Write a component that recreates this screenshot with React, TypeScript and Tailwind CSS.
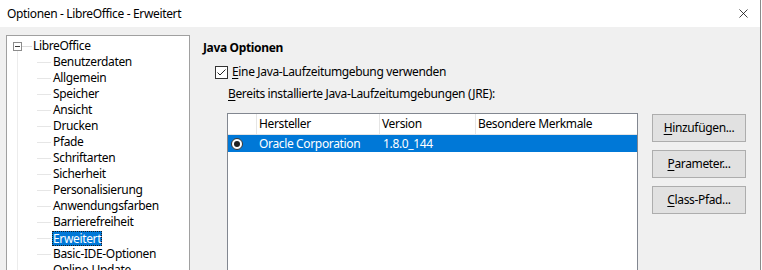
import { X } from "lucide-react"

const treeItems = [
  "Benutzerdaten",
  "Allgemein",
  "Speicher",
  "Ansicht",
  "Drucken",
  "Pfade",
  "Schriftarten",
  "Sicherheit",
  "Personalisierung",
  "Anwendungsfarben",
  "Barrierefreiheit",
  "Erweitert",
  "Basic-IDE-Optionen",
  "Online-Update",
]

function Btn({ hot, rest }: { hot: string; rest: string }) {
  return (
    <button className="h-[28px] w-[94px] border border-[#adadad] bg-[#e1e1e1] text-[12px] text-black">
      <span className="underline underline-offset-2">{hot}</span>
      {rest}
    </button>
  )
}

export default function App() {
  return (
    <div
      className="w-[762px] h-[270px] overflow-hidden bg-white tracking-[-0.35px]"
      style={{ fontFamily: '"Segoe UI", "Noto Sans", sans-serif' }}
    >
      <div className="w-[761px] h-[270px] border-r border-[#8a8a8a] flex flex-col">
        {/* Title bar */}
        <div className="h-[27px] shrink-0 bg-white flex items-center justify-between pl-[7px] pr-[9px]">
          <span className="text-[12px] text-black">Optionen - LibreOffice - Erweitert</span>
          <X className="w-[15px] h-[15px] text-black" strokeWidth={1.2} />
        </div>

        {/* Body */}
        <div className="flex-1 bg-[#f0f0f0] flex pl-[6px] pt-[8px] text-[12px] text-black">
          {/* Tree */}
          <div className="relative w-[184px] h-[300px] shrink-0 border border-[#a0a0a0] bg-white pt-[2px]">
            <div className="absolute left-[10px] top-[15px] w-px h-[280px] bg-[#ececec]" />
            <div className="flex items-center h-[16px]">
              <div className="ml-[6px] w-[9px] h-[9px] border border-[#8c8c8c] bg-white flex items-center justify-center">
                <div className="w-[5px] h-px bg-[#3a3a3a]" />
              </div>
              <div className="w-[10px] h-px bg-[#dcdcdc]" />
              <span className="ml-px leading-[16px]">LibreOffice</span>
            </div>
            {treeItems.map((item) => (
              <div key={item} className="flex items-center h-[16px]">
                <div className="ml-[30px] w-[14px] h-px bg-[#e6e6e6]" />
                <span
                  className={
                    item === "Erweitert"
                      ? "ml-[1px] px-[1px] leading-[15px] bg-[#0078d7] text-white outline-1 outline-dotted outline-[#1c1c1c] -outline-offset-1"
                      : "ml-[2px] leading-[16px]"
                  }
                >
                  {item}
                </span>
              </div>
            ))}
          </div>

          {/* Right */}
          <div className="flex-1 pl-[13px] pt-[5px]">
            <div className="font-bold h-[16px] leading-[16px]">Java Optionen</div>
            <div className="flex items-center h-[16px] mt-[8px] ml-[12px]">
              <div className="w-[13px] h-[13px] border border-[#333] bg-white flex items-center justify-center">
                <svg width="11" height="11" viewBox="0 0 11 11">
                  <path d="M1.5 5.5 L4 8 L9.5 2.5" fill="none" stroke="#222" strokeWidth="1" />
                </svg>
              </div>
              <span className="ml-[4px]">
                <span className="underline underline-offset-2">E</span>ine Java-Laufzeitumgebung verwenden
              </span>
            </div>
            <div className="h-[16px] leading-[16px] mt-[6px] ml-[25px]">
              <span className="underline underline-offset-2">B</span>ereits installierte Java-Laufzeitumgebungen (JRE):
            </div>

            <div className="flex mt-[11px] ml-[24px]">
              {/* Table */}
              <div className="w-[411px] h-[200px] border-l border-t border-r border-[#828790] bg-white">
                <div className="flex h-[21px] items-center border-b border-[#e5e5e5]">
                  <div className="w-[29px] h-full border-r border-[#e5e5e5]" />
                  <div className="w-[123px] h-full border-r border-[#e5e5e5] pl-[2px] leading-[20px]">Hersteller</div>
                  <div className="w-[96px] h-full border-r border-[#e5e5e5] pl-[2px] leading-[20px]">Version</div>
                  <div className="flex-1 pl-[2px] leading-[20px]">Besondere Merkmale</div>
                </div>
                <div className="flex h-[17px] items-center bg-[#0078d7] text-white">
                  <div className="w-[29px] flex items-center pl-[3px]">
                    <div className="w-[12px] h-[12px] rounded-full bg-white border border-[#333] flex items-center justify-center">
                      <div className="w-[6px] h-[6px] rounded-full bg-[#222]" />
                    </div>
                  </div>
                  <div className="w-[124px] pl-[2px]">Oracle Corporation</div>
                  <div className="w-[96px] pl-[2px]">1.8.0_144</div>
                </div>
              </div>

              {/* Buttons */}
              <div className="flex flex-col gap-[8px] ml-[14px] mt-[1px]">
                <Btn hot="H" rest="inzufügen..." />
                <Btn hot="P" rest="arameter..." />
                <Btn hot="C" rest="lass-Pfad..." />
              </div>
            </div>
          </div>
        </div>
      </div>
    </div>
  )
}
